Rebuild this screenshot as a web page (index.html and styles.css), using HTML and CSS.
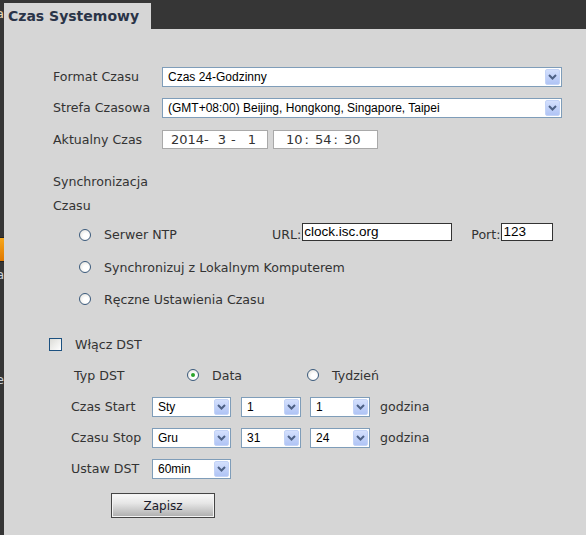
FILE: index.html
```html
<!DOCTYPE html>
<html lang="pl">
<head>
  <meta charset="UTF-8">
  <meta name="viewport" content="width=device-width, initial-scale=1.0">
  <title>Czas Systemowy</title>
  <link rel="stylesheet" href="styles.css">
</head>
<body>

  <div class="side">
    <div class="side-item side-top"><span>Konfiguracja</span></div>
    <div class="side-active"></div>
    <div class="side-item side-a"><span>Data</span></div>
    <div class="side-item side-e"><span>Ustawienie</span></div>
  </div>

  <div class="main">
    <div class="tabs">
      <div class="tab">Czas Systemowy</div>
    </div>

    <div class="panel">
      <div class="row">
        <div class="lbl">Format Czasu</div>
        <div class="sel sel-wide"><span>Czas 24-Godzinny</span><span class="arrow"><svg width="9" height="6" viewBox="0 0 9 6"><path d="M1 1 L4.5 4.5 L8 1" fill="none" stroke="#4d6185" stroke-width="2"/></svg></span></div>
      </div>
      <div class="row">
        <div class="lbl">Strefa Czasowa</div>
        <div class="sel sel-wide"><span>(GMT+08:00) Beijing, Hongkong, Singapore, Taipei</span><span class="arrow"><svg width="9" height="6" viewBox="0 0 9 6"><path d="M1 1 L4.5 4.5 L8 1" fill="none" stroke="#4d6185" stroke-width="2"/></svg></span></div>
      </div>
      <div class="row row-time">
        <div class="lbl">Aktualny Czas</div>
        <div class="clock clock-date"><span>2014-</span><span class="c-3">3</span><span class="c-dash">-</span><span class="c-1">1</span></div>
        <div class="clock clock-time"><span>10</span><span class="c-sep">:</span><span>54</span><span class="c-sep">:</span><span>30</span></div>
      </div>

      <div class="text-row sync-first">Synchronizacja</div>
      <div class="text-row">Czasu</div>

      <div class="radio-row radio-first">
        <span class="radio"></span>
        <span class="ntp-label">Serwer NTP</span>
        <span>URL:</span><span class="field field-url">clock.isc.org</span>
        <span class="port-label">Port:</span><span class="field field-port">123</span>
      </div>
      <div class="radio-row">
        <span class="radio"></span>
        <span>Synchronizuj z Lokalnym Komputerem</span>
      </div>
      <div class="radio-row">
        <span class="radio"></span>
        <span>Ręczne Ustawienia Czasu</span>
      </div>

      <div class="check-row">
        <span class="checkbox"></span>
        <span>Włącz DST</span>
      </div>

      <div class="dst-type">
        <span class="dst-type-label">Typ DST</span>
        <span class="radio checked"></span>
        <span class="opt-data">Data</span>
        <span class="radio"></span>
        <span>Tydzień</span>
      </div>

      <div class="dst-row">
        <div class="dst-label">Czas Start</div>
        <div class="sel sel-month"><span>Sty</span><span class="arrow"><svg width="9" height="6" viewBox="0 0 9 6"><path d="M1 1 L4.5 4.5 L8 1" fill="none" stroke="#4d6185" stroke-width="2"/></svg></span></div>
        <div class="sel sel-small"><span>1</span><span class="arrow"><svg width="9" height="6" viewBox="0 0 9 6"><path d="M1 1 L4.5 4.5 L8 1" fill="none" stroke="#4d6185" stroke-width="2"/></svg></span></div>
        <div class="sel sel-small"><span>1</span><span class="arrow"><svg width="9" height="6" viewBox="0 0 9 6"><path d="M1 1 L4.5 4.5 L8 1" fill="none" stroke="#4d6185" stroke-width="2"/></svg></span></div>
        <div class="unit">godzina</div>
      </div>
      <div class="dst-row">
        <div class="dst-label">Czasu Stop</div>
        <div class="sel sel-month"><span>Gru</span><span class="arrow"><svg width="9" height="6" viewBox="0 0 9 6"><path d="M1 1 L4.5 4.5 L8 1" fill="none" stroke="#4d6185" stroke-width="2"/></svg></span></div>
        <div class="sel sel-small"><span>31</span><span class="arrow"><svg width="9" height="6" viewBox="0 0 9 6"><path d="M1 1 L4.5 4.5 L8 1" fill="none" stroke="#4d6185" stroke-width="2"/></svg></span></div>
        <div class="sel sel-small"><span>24</span><span class="arrow"><svg width="9" height="6" viewBox="0 0 9 6"><path d="M1 1 L4.5 4.5 L8 1" fill="none" stroke="#4d6185" stroke-width="2"/></svg></span></div>
        <div class="unit">godzina</div>
      </div>
      <div class="dst-row">
        <div class="dst-label">Ustaw DST</div>
        <div class="sel sel-month"><span>60min</span><span class="arrow"><svg width="9" height="6" viewBox="0 0 9 6"><path d="M1 1 L4.5 4.5 L8 1" fill="none" stroke="#4d6185" stroke-width="2"/></svg></span></div>
      </div>

      <button class="save">Zapisz</button>
    </div>
  </div>

</body>
</html>
```

FILE: styles.css
```css
html, body {
  height: 100%;
}
body {
  margin: 0;
  background-color: #363636;
  font-family: "DejaVu Sans", Verdana, sans-serif;
  font-size: 12.6px;
  color: #333;
  display: flex;
  overflow: hidden;
}

/* pasek boczny - widoczna tylko koncowka */
.side {
  width: 4px;
  flex-shrink: 0;
  display: flex;
  flex-direction: column;
}
.side-item {
  display: flex;
  justify-content: flex-end;
  overflow: hidden;
  white-space: nowrap;
  height: 16px;
  line-height: 16px;
  font-size: 12px;
}
.side-top {
  margin-top: 6px;
  color: #e6d8b8;
  font-size: 13px;
}
.side-active {
  margin-top: 215px;
  height: 25px;
  box-sizing: border-box;
  border-top: 1px solid #222;
  border-bottom: 1px solid #222;
  background: linear-gradient(#f7a81c, #e07800);
}
.side-a {
  margin-top: 5px;
  color: #c9d2dc;
}
.side-e {
  margin-top: 89px;
  color: #c9d2dc;
}

.main {
  flex: 1;
  display: flex;
  flex-direction: column;
}
.tabs {
  height: 29px;
  box-sizing: border-box;
  padding-top: 3px;
  display: flex;
}
.tab {
  width: 147px;
  background-color: #d6d6d6;
  color: #2a3448;
  font-weight: bold;
  font-size: 14px;
  line-height: 26px;
  padding-left: 4px;
  box-sizing: border-box;
}
.panel {
  flex: 1;
  background-color: #d6d6d6;
  padding: 32px 0 0 49px;
  display: flex;
  flex-direction: column;
  align-items: flex-start;
}

.row {
  display: flex;
  align-items: center;
  height: 31px;
}
.row-time {
  height: 32px;
}
.lbl {
  width: 109px;
}

/* listy rozwijane w stylu XP */
.sel {
  display: flex;
  align-items: center;
  justify-content: space-between;
  box-sizing: border-box;
  height: 20px;
  padding: 0 1px 0 5px;
  border: 1px solid #7f9db9;
  background-color: #fff;
  color: #000;
  font-family: "Liberation Sans", Arial, sans-serif;
  font-size: 12px;
}
.arrow {
  width: 15px;
  height: 16px;
  box-sizing: border-box;
  border: 1px solid #c3d3f7;
  border-radius: 2px;
  background: linear-gradient(#d4e0fd, #b0c4f5);
  display: flex;
  align-items: center;
  justify-content: center;
}
.sel-wide {
  width: 400px;
}
.sel-month {
  width: 79px;
}
.sel-small {
  width: 60px;
  margin-left: 10px;
}
.sel-small + .sel-small {
  margin-left: 9px;
}

.clock {
  height: 19px;
  box-sizing: border-box;
  border: 1px solid #a9a9a9;
  background-color: #fff;
  font-size: 13px;
  display: flex;
  align-items: center;
  white-space: pre;
}
.clock-date {
  width: 106px;
  padding-left: 8px;
}
.c-3 { margin-left: 9px; }
.c-dash { margin-left: 5px; }
.c-1 { margin-left: 12px; }
.clock-time {
  width: 105px;
  margin-left: 5px;
  padding-left: 12px;
}
.c-sep { margin: 0 6px 0 2px; }

.text-row {
  height: 24px;
  line-height: 24px;
}
.sync-first {
  margin-top: 15px;
}

.radio-row {
  display: flex;
  align-items: center;
  height: 32px;
  padding-left: 26px;
}
.radio-first {
  height: 33px;
}
.radio {
  width: 12px;
  height: 12px;
  box-sizing: border-box;
  border: 1px solid #3b5a7c;
  border-radius: 50%;
  background: radial-gradient(circle at 60% 60%, #ffffff 30%, #dedcd4 100%);
  margin-right: 13px;
  display: flex;
  align-items: center;
  justify-content: center;
}
.radio.checked::after {
  content: "";
  width: 4px;
  height: 4px;
  border-radius: 50%;
  background-color: #2ba52b;
}
.ntp-label {
  width: 168px;
}
.field {
  height: 18px;
  box-sizing: border-box;
  border: 1px solid #333;
  background-color: #fff;
  color: #000;
  font-family: "Liberation Sans", Arial, sans-serif;
  font-size: 13.5px;
  line-height: 15px;
  padding-left: 1px;
  margin-left: 1px;
  align-self: flex-start;
  margin-top: 5px;
}
.field-url {
  width: 150px;
}
.port-label {
  margin-left: 19px;
}
.field-port {
  width: 52px;
}

.check-row {
  display: flex;
  align-items: center;
  height: 29px;
  margin-top: 15px;
  margin-left: -4px;
}
.checkbox {
  width: 13px;
  height: 13px;
  box-sizing: border-box;
  border: 1px solid #1c5180;
  background: linear-gradient(135deg, #dcdcd7, #ffffff);
  margin-right: 13px;
}

.dst-type {
  display: flex;
  align-items: center;
  height: 32px;
  padding-left: 21px;
}
.dst-type-label {
  width: 113px;
}
.opt-data {
  width: 95px;
}

.dst-row {
  display: flex;
  align-items: center;
  height: 31px;
  padding-left: 18px;
}
.dst-label {
  width: 81px;
}
.unit {
  margin-left: 10px;
}

.save {
  margin: 9px 0 0 58px;
  width: 104px;
  height: 25px;
  border: 1px solid #454545;
  box-shadow: inset 0 0 0 1px #f4f4f4;
  background: linear-gradient(#fafafa, #e6e6e6 40%, #adadad);
  font-family: "DejaVu Sans", Verdana, sans-serif;
  font-size: 12px;
  color: #1a1a2a;
  padding: 0;
}
```
